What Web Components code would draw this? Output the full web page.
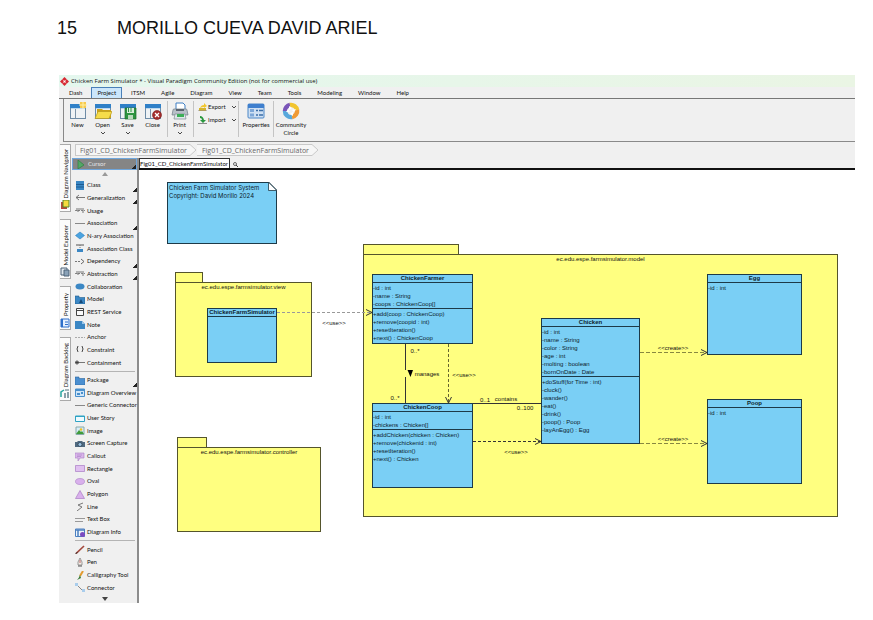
<!DOCTYPE html>
<html lang="en">
<head>
<meta charset="utf-8">
<title>Chicken Farm Simulator</title>
<style>
body{margin:0;background:#fff;color:#111;font-family:Lato,Roboto,"Noto Sans",sans-serif;font-size:6px;line-height:8px}
</style>
</head>
<body>
<doc-page number="15" name="MORILLO CUEVA DAVID ARIEL">
  <app-window>
    <title-bar slot="title">Chicken Farm Simulator * - Visual Paradigm Community Edition (not for commercial use)</title-bar>
    <menu-bar slot="menu" items="Dash,Project,ITSM,Agile,Diagram,View,Team,Tools,Modeling,Window,Help" active="Project"></menu-bar>
    <tool-ribbon slot="ribbon"></tool-ribbon>
    <side-rail slot="rail"></side-rail>
    <bread-crumb slot="crumb" items="Fig01_CD_ChickenFarmSimulator,Fig01_CD_ChickenFarmSimulator"></bread-crumb>
    <tool-palette slot="palette"></tool-palette>
    <diagram-canvas slot="canvas"></diagram-canvas>
  </app-window>
</doc-page>

<script>
const reset = `<style>*,:host{box-sizing:border-box}button{font:inherit;line-height:inherit;color:inherit;background:none;border:0;padding:0;margin:0}svg{display:block;flex:none}ul,ol{list-style:none;margin:0;padding:0}</style>`;
class Base extends HTMLElement{
  connectedCallback(){ this.attachShadow({mode:'open'}).innerHTML = reset + this.render(); }
}
const def=(n,f)=>customElements.define(n,class extends Base{render(){return f(this)}});

const svg=(s,body,w)=>`<svg width="${w||s}" height="${s}" viewBox="0 0 ${w?w:s} ${s}" aria-hidden="true">${body}</svg>`;
const win=`<rect x="1.500" y="2.500" width="15" height="14" fill="#eef2f5" stroke="#6d8ba6"/><path d="M1 2h16v4H1z" fill="#2f80c8"/><path d="M6.500 6v10" stroke="#7c93a8"/><path d="M2 6.500h14" stroke="#bcd8ee"/>`;
const big={
  New:svg(18,win+`<path d="M11 0h6v6h-6z" fill="#f7c94c"/><path d="M10 3h8M14 0v7" stroke="#fff0a8"/>`),
  Open:svg(18,win+`<path d="M3 7h5l1 1h8v8H3z" fill="#c9a21b"/><path d="M1 16.500l3-7h14l-3 7z" fill="#f5dc4a" stroke="#b99a1c" stroke-width=".7"/>`),
  Save:svg(18,win+`<path d="M6 6h11v11H6z" fill="#2d9440" stroke="#1c6b2c" stroke-width=".7"/><path d="M8 6h7v5H8z" fill="#d9ecd9"/><path d="M9 13h5v4H9z" fill="#b9d9bb"/><path d="M9.500 6v4M12 6v4" stroke="#2d9440"/>`),
  Close:svg(18,win+`<circle cx="13" cy="13" r="4.500" fill="#a52d2d" stroke="#771b1b" stroke-width=".6"/><path d="M11 11l4 4M15 11l-4 4" stroke="#fff" stroke-width="1.300"/>`),
  Print:svg(18,`<path d="M5 1h7l2 2v6H5z" fill="#fff" stroke="#3f7fc4"/><path d="M2 8q0-1 1-1h12q1 0 1 1l1 5H1z" fill="#b8c0c8" stroke="#6f7b86" stroke-width=".7"/><path d="M5 7h8v2H5z" fill="#59636e"/><path d="M4 12h10l1 5H3z" fill="#dfe6ea" stroke="#808b94" stroke-width=".7"/><path d="M6 12h7v3H6z" fill="#3cae57"/>`),
  Properties:svg(18,`<rect x="1" y="2" width="16" height="14" rx="1" fill="#cfe0f3" stroke="#4b86c6"/><path d="M1 2h16v4H1z" fill="#3e7fce"/><path d="M3 7h4v3H3zM3 11.500h4v3H3z" fill="#7da7d8"/><path d="M9 8.500h2M12 8.500h4M9 13h2M12 13h4" stroke="#3b6ea8" stroke-width="1.500"/>`),
  Community:svg(18,`<g fill="none" stroke-width="4.500"><path d="M3 9a6 6 0 0 1 5-6" stroke="#7a55b8"/><path d="M8 3a6 6 0 0 1 7 5" stroke="#f2c52e"/><path d="M15 8a6 6 0 0 1-5 7" stroke="#f09a35"/><path d="M10 15a6 6 0 0 1-7-6" stroke="#58a8dc"/></g><path d="M7 4l3 2-3 2M14 7l-2 3-2-2M11 14l-3-2 3-2M4 10l2-3 2 3" fill="#fff"/>`)
};
const chev=svg(4,`<path d="M1 1l2 2 2-2" fill="none" stroke="#333" stroke-width=".9"/>`,6);

def('doc-page',e=>`<style>
:host{display:block;padding:15px 18px 17px 57px}
header{display:flex;gap:40px;font:18px/27px "Liberation Sans",Arial,sans-serif;color:#111;margin-bottom:33px}
main{margin-left:2px}
</style><header><span>${e.getAttribute('number')}</span><span>${e.getAttribute('name')}</span></header><main><slot></slot></main>`);

def('app-window',()=>`<style>
:host{display:block;background:#f0f0f0}
.body{display:grid;grid-template-columns:13px minmax(0,1fr)}
.work{display:grid;grid-template-columns:67px minmax(0,1fr);grid-template-rows:auto 1fr}
.crumb{grid-column:1/3}
</style><slot name="title"></slot><slot name="menu"></slot><slot name="ribbon"></slot>
<div class="body"><slot name="rail"></slot><div class="work"><div class="crumb"><slot name="crumb"></slot></div><slot name="palette"></slot><slot name="canvas"></slot></div></div>`);

def('title-bar',()=>`<style>
:host{display:flex;align-items:center;gap:2px;height:12px;padding-left:1px;background:linear-gradient(90deg,#e4f7ee,#eaf5e4);white-space:nowrap;font-family:"Open Sans","Noto Sans",sans-serif}
</style>${svg(9,`<path d="M4.500 0L9 4.500 4.500 9 0 4.500z" fill="#d62b35"/><path d="M2.500 2.500l4 4M6.500 2.500l-4 4" stroke="#f3a5a8" stroke-width=".8"/><circle cx="4.500" cy="4.500" r="1" fill="#fff"/>`)}<span><slot></slot></span>`);

def('menu-bar',e=>`<style>
:host{display:block;height:12px;border-bottom:1px solid #777}
nav{display:flex;padding-left:2px;height:11px}
button{padding:0 8px;height:11px;line-height:12px}
.on{background:#cbe6fb;border:1px solid #4a80b8;border-bottom:0;padding:0 5px;margin:0 1px;line-height:10px}
</style><nav>${e.getAttribute('items').split(',').map(t=>`<button class="${t==e.getAttribute('active')?'on':''}">${t}</button>`).join('')}</nav>`);

def('tool-ribbon',()=>{
 const b=(n,drop,label)=>`<button class="b">${big[n]}<span>${label||n}</span>${drop?chev:''}</button>`;
 return `<style>
:host{display:block;height:43px;margin-left:4px;border-left:1px solid #888;border-bottom:1px solid #8a8a8a;background:#f0f0f0}
div{display:flex}
.all{padding:3px 0 0 1px;height:42px}
.b{display:flex;flex-direction:column;align-items:center;width:25px;gap:1px}
.b svg:last-child:not(:first-child){margin-top:1px}
.wide .b{width:34px}
i{width:1px;background:#c4c4c4;height:36px;margin:-1px 0 0 2px}
.s{flex-direction:column;width:44px;padding-left:4px}
.s button{display:flex;align-items:center;gap:1px;height:9px;margin-bottom:4px}
.s button svg:last-child{margin-left:4px}
.p .b{width:23px}
</style><div class="all">${b('New')}${b('Open',1)}${b('Save',1)}${b('Close')}<i></i><div class="p">${b('Print',1)}</div><i></i>
<div class="s"><button>${svg(8,`<path d="M1 5h7v3H1z" fill="#d6b52e"/><path d="M2 5q1-3 4-3V0l3 3-3 2V4Q4 4 2 5" fill="#f3c72c"/><path d="M0 8h9" stroke="#8b8b8b"/>`,9)}<span>Export</span>${chev}</button><button>${svg(8,`<path d="M2 0q3 0 4 4h2L5 7 2 4h2Q4 2 2 2z" fill="#28973d"/><path d="M0 7.500h9" stroke="#8b8b8b"/>`,9)}<span>Import</span>${chev}</button></div><i style="margin-left:0"></i>
<div class="wide">${b('Properties')}</div><i style="margin-left:0"></i><div class="wide">${b('Community',0,'Community<br>Circle')}</div></div>`});

def('side-rail',()=>{
 const ic={
 a:`<path d="M1 2h6v7H1z" fill="#b74a3a"/><path d="M3 0h6v7H3z" fill="#f6dc3c" stroke="#57862b"/>`,
 b:`<path d="M1 1h6v7H1z" fill="#dfe7ee" stroke="#4d6379"/><path d="M4 3h5v6H4z" fill="#8aa2b8" stroke="#4d6379"/>`,
 c:`<path d="M1 1h8v8H1z" fill="#e7f1ff" stroke="#2e6fca"/><path d="M2 1v8" stroke="#2e6fca" stroke-width="2"/><path d="M5 4h3M5 6.500h3" stroke="#2e6fca"/>`,
 d:`<path d="M1 8V3l3-2" stroke="#29a7a0" stroke-width="1.500" fill="none"/><path d="M4 4h2v5H4zM7 3h2v6H7z" fill="#8aa0a8"/><path d="M5 1h4" stroke="#53707c"/>`};
 return `<style>:host{display:flex;flex-direction:column;gap:7px;padding:2px 1px 0 1px;background:#f0f0f0}
button{display:flex;flex-direction:column;align-items:center;justify-content:flex-end;gap:2px;width:11px;padding-bottom:1px;background:#fbfbfb;border-top:1px solid #aaa;border-right:1px solid #aaa;border-bottom:1px solid #aaa}
span{writing-mode:vertical-rl;transform:rotate(180deg);line-height:9px;white-space:nowrap}
.a{height:68px}.b{height:60px}.c{height:44px}.d{height:64px}
</style>`+[['a','Diagram Navigator'],['b','Model Explorer'],['c','Property'],['d','Diagram Backlog']].map(([k,t])=>`<button class="${k}"><span>${t}</span>${svg(10,ic[k])}</button>`).join('')});

def('bread-crumb',e=>`<style>
:host{display:block;height:16px;padding:2px 0 0 3px;font-size:7px;color:#666;font-family:"Open Sans","Noto Sans",sans-serif}
ol{display:flex;height:12px}
li{display:flex;line-height:11px}
a{color:inherit;text-decoration:none;border:1px solid #c9c9c9;border-width:1px 0;padding:0 1px 0 5px;background:#f6f6f6;height:12px;white-space:nowrap}
li:first-child a{border-left-width:1px;padding-left:4px}
</style><ol>${e.getAttribute('items').split(',').map(t=>`<li><a href="#">${t}</a>${svg(12,`<path d="M0 .5h2l6 5.500-6 5.500H0" fill="#f6f6f6" stroke="#c9c9c9"/>`,9)}</li>`).join('')}</ol>`);

const I={
 box:`<path d="M1 0h8v9H1z" fill="#3b87c4"/><path d="M1 3.500h8M1 6h8" stroke="#1f5c93"/>`,
 gen:`<path d="M4 2L1 4.500 4 7M1 4.500h9" stroke="#777" fill="none"/>`,
 use:`<path d="M0 4.500h10" stroke="#888" stroke-dasharray="2 1"/><path d="M2 2v3h2V2M5 3h2M8 2v5" stroke="#777" fill="none"/>`,
 line:`<path d="M0 4.500h10" stroke="#888"/>`,
 nary:`<path d="M5 1l4.500 3.500L5 8 .5 4.500z" fill="#4aa3e0" stroke="#2b7fbf" stroke-width=".6"/>`,
 ac:`<path d="M1 1h8" stroke="#555"/><path d="M5 1v4" stroke="#777" stroke-dasharray="1 1"/><path d="M2 5h6v3H2z" fill="#3b87c4"/>`,
 dep:`<path d="M0 4.500h6" stroke="#777" stroke-dasharray="2 1"/><path d="M6 2l3 2.500L6 7" stroke="#666" fill="none"/>`,
 oval:`<ellipse cx="5" cy="4.500" rx="4.500" ry="3" fill="#3b87c4"/>`,
 folder:`<path d="M0 1h4v1.500h6V9H0z" fill="#4b8fd0" stroke="#2b66a0" stroke-width=".6"/>`,
 model:`<path d="M0 1h4v1.500h6V9H0z" fill="#3b87c4" stroke="#24608f" stroke-width=".6"/><path d="M6 4l2 4H4z" fill="#174a78"/>`,
 rest:`<path d="M1.500 1.500h7v7h-7zM1 3.500h8" fill="#fafafa" stroke="#444"/>`,
 note:`<path d="M0 1h7l3 3v5H0z" fill="#3b87c4"/><path d="M7 1v3h3" fill="#9cc7ea"/>`,
 anchor:`<path d="M0 4.500h10" stroke="#aaa" stroke-dasharray="2 1"/>`,
 con:`<path d="M3 1Q1 4 3 7M7 1q2 3 0 6" stroke="#444" fill="none"/>`,
 cont:`<path d="M3 4.500h7" stroke="#777"/><circle cx="2" cy="4.500" r="1.500" fill="#ddd" stroke="#444"/><path d="M.5 4.500h3" stroke="#444"/>`,
 over:`<path d="M.5 1h9v7.500h-9z" fill="#cfe5f8" stroke="#4a90cc"/><path d="M.5 2h9" stroke="#4a90cc" stroke-width="2"/><path d="M2 5h3v2H2zM6 4h2v2H6z" fill="#4a90cc"/>`,
 story:`<path d="M.5 2h9v5.500h-9z" fill="#eefaff" stroke="#2fa3c4"/><path d="M0 2.500h10" stroke="#2fa3c4"/>`,
 img:`<path d="M1 1h8v7.500H1z" fill="#d8ecfa" stroke="#8aa"/><path d="M1 8l3-4 2 2 1-1 2 3z" fill="#3f9b3a"/><circle cx="6" cy="3.500" r="1.300" fill="#f0c020"/>`,
 cam:`<path d="M0 3h2l1-1h4l1 1h2v5H0z" fill="#50697f"/><circle cx="5" cy="5.500" r="2" fill="#9cc3e4" stroke="#2a3c4c" stroke-width=".7"/>`,
 call:`<path d="M0 1h9v5H5L3 9V6H0z" fill="#d9b5ea" stroke="#a97cc4" stroke-width=".6"/><path d="M2 3h5M2 4.500h4" stroke="#a97cc4" stroke-width=".6"/>`,
 rect:`<path d="M.5 1.500h9v6h-9z" fill="#e0c0f0" stroke="#a97cc4" stroke-width=".7"/>`,
 ov2:`<ellipse cx="5" cy="4.500" rx="4.500" ry="3" fill="#d9b0ec" stroke="#a97cc4" stroke-width=".6"/>`,
 poly:`<path d="M5 .5L9.500 8.500h-9z" fill="#d9b0ec" stroke="#a97cc4" stroke-width=".7"/>`,
 zig:`<path d="M8 1L3 3l4 2-5 4" stroke="#777" fill="none"/>`,
 text:`<path d="M0 3.500h10M0 6.500h8" stroke="#999"/>`,
 info:`<path d="M.5 1h9v7.500h-9z" fill="#eef4fb" stroke="#4a7fc0"/><path d="M.5 2h9M3 2v6" stroke="#4a7fc0" stroke-width="1.500"/><circle cx="7.500" cy="6.500" r="2.500" fill="#7b4bc0"/>`,
 pencil:`<path d="M1 8.500L9 1" stroke="#a3483c" stroke-width="1.700"/><path d="M.5 9l2-2" stroke="#333"/>`,
 pen:`<path d="M5 0l2 4v3H3V4z" fill="#f5efe8" stroke="#777" stroke-width=".7"/><path d="M3 8h4" stroke="#555"/><path d="M5 2v3" stroke="#b66"/>`,
 brush:`<path d="M8 0L5 5" stroke="#e39b2f" stroke-width="2"/><path d="M5 4l1 3-4 2q2-2 3-5" fill="#377a37"/>`,
 conn:`<path d="M2 2l6 6" stroke="#888"/><path d="M0 0h3v3H0zM7 6h3v3H7z" fill="#a9cdec"/>`
};
def('tool-palette',()=>{
 const g1=[['box','Class',1],['gen','Generalization',1],['use','Usage'],['line','Association',1],['nary','N-ary Association'],['ac','Association Class'],['dep','Dependency',1],['use','Abstraction',1],['oval','Collaboration'],['model','Model'],['rest','REST Service'],['note','Note'],['anchor','Anchor'],['con','Constraint'],['cont','Containment']];
 const g2=[['folder','Package',1],['over','Diagram Overview'],['line','Generic Connector'],['story','User Story'],['img','Image'],['cam','Screen Capture'],['call','Callout'],['rect','Rectangle'],['ov2','Oval'],['poly','Polygon'],['zig','Line'],['text','Text Box'],['info','Diagram Info']];
 const g3=[['pencil','Pencil'],['pen','Pen'],['brush','Calligraphy Tool'],['conn','Connector']];
 const g=a=>`<ul style="flex:${a.length} 1 0">${a.map(([i,t,m])=>`<li><button>${svg(9,I[i],10)}<span>${t}</span>${m?'<b></b>':''}</button></li>`).join('')}</ul>`;
 return `<style>
:host{display:flex;flex-direction:column;border-right:2px solid #8c8c8c;background:#f0f0f0}
ul{display:flex;flex-direction:column;min-height:0}
li{flex:1 1 0;min-height:0;display:flex}
button{flex:1;display:flex;align-items:center;gap:2px;padding-left:3px;white-space:nowrap;min-width:0}
b{width:4px;height:4px;margin-left:auto;align-self:flex-end;background:linear-gradient(135deg,transparent 50%,#222 50%)}
.cur{flex:none;height:12px;background:#858585;border:1px solid #6fa6dc;color:#e4e4e4}
hr{width:60px;margin:2px auto;border:0;border-top:1px solid #b4b4b4;flex:none}
.ar{flex:none;height:9px;margin:0 auto;padding:0;width:6px}
</style><button class="cur">${svg(9,`<path d="M2 0l6 5-6 4z" fill="#53a866" stroke="#2e7f41" stroke-width=".7"/>`,10)}<span>Cursor</span><b></b></button>
<button class="ar" aria-label="Scroll up">${svg(5,`<path d="M3 0l3 4H0z" fill="#999"/>`,6)}</button>${g(g1)}<hr>${g(g2)}<hr>${g(g3)}
<button class="ar" aria-label="Scroll down">${svg(5,`<path d="M3 5l3-4H0z" fill="#444"/>`,6)}</button>`});

/* A class node: name, attributes and operations compartments. */
def('uml-class',e=>{
 const part=k=>e.hasAttribute(k)?`<ul>${e.getAttribute(k).split('|').map(t=>`<li>${t}</li>`).join('')}</ul>`:'';
 return `<style>:host{display:block;background:#7acff5;border:1px solid #1d3a48;white-space:nowrap;color:#0d222c}
h3{margin:0;font-size:inherit;font-weight:bold;text-align:center;line-height:7px}
ul{border-top:1px solid #1d3a48;padding:1px 0 0}li{line-height:8px}
h3:last-child{border-bottom:1px solid #1d3a48;height:8px}</style><h3>${e.getAttribute('name')}</h3>${part('attrs')}${part('ops')}`});

/* A package node: folder tab over a titled body. */
def('uml-package',e=>`<style>:host{display:flex;flex-direction:column;white-space:nowrap;--line:#55552c}
i{width:var(--tab);height:10px;background:#ffff80;border:1px solid var(--line);border-bottom:0}
div{flex:1;background:#ffff80;border:1px solid var(--line);text-align:center;line-height:8px}</style><i></i><div>${e.getAttribute('name')}</div>`);

def('diagram-canvas',()=>{
 const at=(x,y,w,h)=>`left:${x-139}px;top:${y-170}px;width:${w}px;height:${h}px`;
 const arrow=(x,y)=>`<path d="M${x-6} ${y-3}l6 3-6 3"/>`;
 const t=(x,y,s)=>`<text x="${x}" y="${y+2}">${s}</text>`;
 return `<style>
:host{display:flex;flex-direction:column}
.tabs{display:flex;height:12px;background:#f0f0f0;border-bottom:2px solid #111}
.tabs button{background:#fff;border:1px solid #333;border-bottom:0;padding:0 1px 0 0;line-height:9px;white-space:nowrap}
.tabs svg{margin:4px 0 0 3px}
.area{position:relative;flex:1;min-height:433px;background:#fff;overflow:hidden;font:6px/8px "Liberation Sans",Arial,sans-serif}
.area>*{position:absolute}
.note{background:#7acff5;border:1px solid #1d3a48;padding:1px;color:#0d222c;white-space:nowrap;line-height:8px;font-family:Inter,sans-serif}
.note svg{position:absolute;right:-1px;top:-1px}
.wires{left:-139px;top:-170px;overflow:visible}
</style>
<div class="tabs"><button>Fig01_CD_ChickenFarmSimulator</button>${svg(5,`<circle cx="2" cy="2" r="1.500" fill="none" stroke="#444" stroke-width=".8"/><path d="M3 3l2 2" stroke="#444"/>`)}</div>
<div class="area">
<div class="note" style="${at(167,182,110,62)}">Chicken Farm Simulator System<br>Copyright: David Morillo 2024${svg(9,`<path d="M0 0h9v9z" fill="#fff"/><path d="M.5 0v8.500H9zM.5 0L9 8.500" fill="#fff" stroke="#1d3a48" stroke-width=".8"/>`)}</div>
<uml-package name="ec.edu.espe.farmsimulator.view" style="--tab:28px;${at(175,272,137,105)}"></uml-package>
<uml-package name="ec.edu.espe.farmsimulator.controller" style="--tab:30px;${at(177,437,144,95)}"></uml-package>
<uml-package name="ec.edu.espe.farmsimulator.model" style="--tab:96px;${at(363,244,475,273)}"></uml-package>
<uml-class name="ChickenFarmSimulator" style="${at(207,308,70,55)}"></uml-class>
<uml-class name="ChickenFarmer" attrs="-id : int|-name : String|-coops : ChickenCoop[]" ops="+add(coop : ChickenCoop)|+remove(coopid : int)|+resetIteration()|+next() : ChickenCoop" style="${at(372,274,101,70)}"></uml-class>
<uml-class name="ChickenCoop" attrs="-id : int|-chickens : Chicken[]" ops="+addChicken(chicken : Chicken)|+remove(chickenid : int)|+resetIteration()|+next() : Chicken" style="${at(372,403,101,85)}"></uml-class>
<uml-class name="Chicken" attrs="-id : int|-name : String|-color : String|-age : int|-molting : boolean|-bornOnDate : Date" ops="+doStuff(for Time : int)|-cluck()|-wander()|-eat()|-drink()|-poop() : Poop|-layAnEgg() : Egg" style="${at(541,318,99,126)}"></uml-class>
<uml-class name="Egg" attrs="-id : int" style="${at(707,274,95,81)}"></uml-class>
<uml-class name="Poop" attrs="-id : int" style="${at(707,399,95,85)}"></uml-class>
<svg class="wires" width="855" height="603" viewBox="0 0 855 603">
<g fill="none" stroke="#333" stroke-width="1">
<path d="M277 312.500h95" stroke="#999" stroke-dasharray="3 2"/>${arrow(372,312.5)}
<path d="M405.500 344v26M405.500 377v26M473 403.500h68"/>
<path d="M448.500 344v59" stroke="#666630" stroke-dasharray="3 2"/><path d="M473 441.500h68" stroke-dasharray="3 2"/><path d="M445.500 397l3 6 3-6"/>${arrow(541,441.5)}
<path d="M640 352.500h67M640 443.500h67" stroke="#888840" stroke-dasharray="4 2"/>${arrow(707,352.5)}${arrow(707,443.5)}
</g>
<path d="M407.500 370h5.500l-2.500 7z" fill="#000"/>
<g fill="#111" text-anchor="middle">${t(334,323,'&lt;&lt;use&gt;&gt;')}${t(415,351,'0..*')}${t(427,374,'manages')}${t(395,398,'0..*')}${t(464,375,'&lt;&lt;use&gt;&gt;')}${t(485,400,'0..1')}${t(506,399,'contains')}${t(525,408,'0..100')}${t(516,452,'&lt;&lt;use&gt;&gt;')}${t(673,348,'&lt;&lt;create&gt;&gt;')}${t(673,439,'&lt;&lt;create&gt;&gt;')}</g>
</svg>
</div>`});
</script>
</body>
</html>
